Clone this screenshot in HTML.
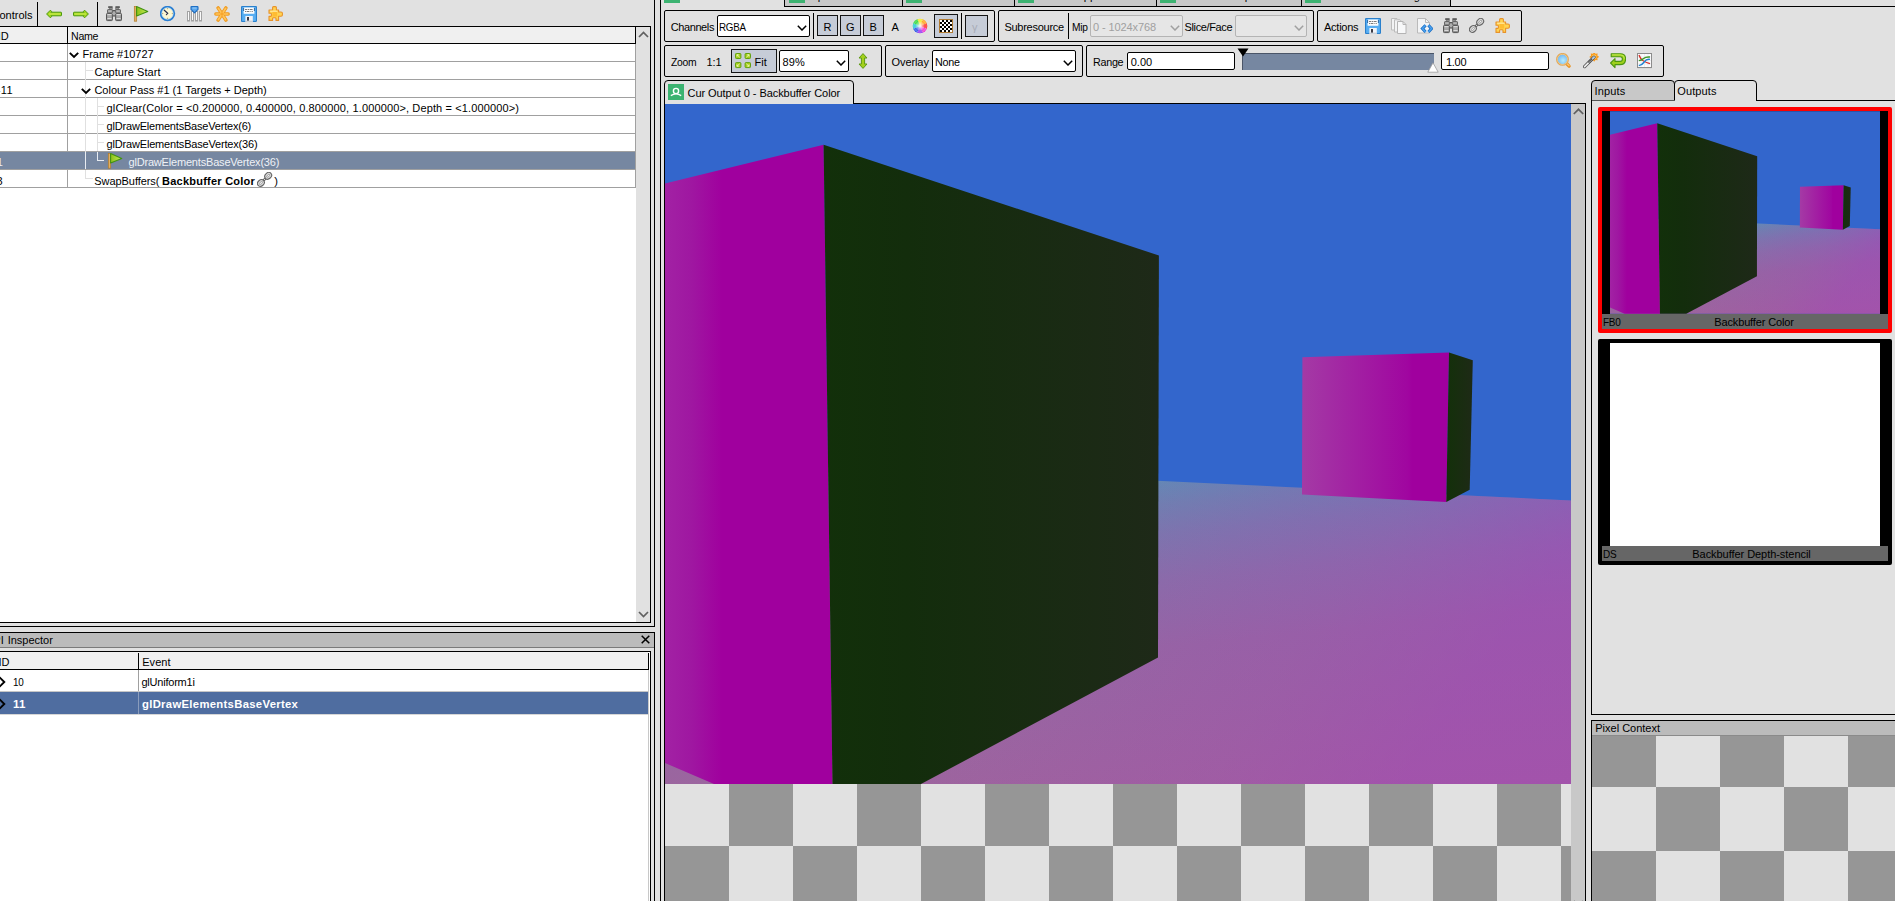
<!DOCTYPE html>
<html><head><meta charset="utf-8"><title>RenderDoc</title>
<style>
html,body{margin:0;padding:0;}
body{width:1895px;height:901px;overflow:hidden;background:#e1e1e1;position:relative;font:11px/13px "Liberation Sans", sans-serif;}
body>div,body>span,body>svg{position:absolute;display:block;}
body>div{box-sizing:content-box;}
body>span{white-space:pre;}
</style></head><body>
<span style="left:-8.5px;top:9px;color:#000;letter-spacing:0.004px;">Controls</span>
<div style="left:37px;top:2px;width:1px;height:24px;background:#000;"></div>
<div style="left:97px;top:2px;width:1px;height:24px;background:#000;"></div>
<svg style="left:46px;top:6px;" width="16" height="16" viewBox="0 0 16 16"><path d="M0.6 8 L4.4 4.2 L5.6 5.4 L4.9 6.2 L15 6.2 Q15.5 6.2 15.5 6.7 L15.5 9.3 Q15.5 9.8 15 9.8 L4.9 9.8 L5.6 10.6 L4.4 11.8 Z" fill="#a8d81e" stroke="#4c9a0e" stroke-width="1" stroke-linejoin="round"/><path d="M3 8 L14.5 8" stroke="#c6ee50" stroke-width="1.2"/></svg>
<svg style="left:73px;top:6px;" width="16" height="16" viewBox="0 0 16 16"><g transform="translate(16,0) scale(-1,1)"><path d="M0.6 8 L4.4 4.2 L5.6 5.4 L4.9 6.2 L15 6.2 Q15.5 6.2 15.5 6.7 L15.5 9.3 Q15.5 9.8 15 9.8 L4.9 9.8 L5.6 10.6 L4.4 11.8 Z" fill="#a8d81e" stroke="#4c9a0e" stroke-width="1" stroke-linejoin="round"/><path d="M3 8 L14.5 8" stroke="#c6ee50" stroke-width="1.2"/></g></svg>
<svg style="left:106px;top:6px;" width="16" height="16" viewBox="0 0 16 16"><g transform=""><rect x="2.2" y="0.2" width="4.4" height="1.8" fill="#585858"/><rect x="3.2" y="2" width="3.2" height="1.4" fill="#9a9a9a" stroke="#6a6a6a" stroke-width="0.5"/><rect x="1.5" y="3.6" width="4.9" height="3.6" rx="0.6" fill="#9c9c9c" stroke="#5a5a5a" stroke-width="0.9"/><rect x="2.3" y="4.6" width="3.3" height="0.9" fill="#d0d0d0"/><rect x="0.5" y="7.4" width="5.9" height="7.2" rx="0.9" fill="#8c8c8c" stroke="#565656" stroke-width="1"/><rect x="1.3" y="8.2" width="4.3" height="1.2" fill="#ececec"/><rect x="1.3" y="9.8" width="4.3" height="2" fill="#aaaaaa"/><rect x="1.3" y="12" width="4.3" height="1.1" fill="#dcdcdc"/></g><g transform="translate(16,0) scale(-1,1)"><rect x="2.2" y="0.2" width="4.4" height="1.8" fill="#585858"/><rect x="3.2" y="2" width="3.2" height="1.4" fill="#9a9a9a" stroke="#6a6a6a" stroke-width="0.5"/><rect x="1.5" y="3.6" width="4.9" height="3.6" rx="0.6" fill="#9c9c9c" stroke="#5a5a5a" stroke-width="0.9"/><rect x="2.3" y="4.6" width="3.3" height="0.9" fill="#d0d0d0"/><rect x="0.5" y="7.4" width="5.9" height="7.2" rx="0.9" fill="#8c8c8c" stroke="#565656" stroke-width="1"/><rect x="1.3" y="8.2" width="4.3" height="1.2" fill="#ececec"/><rect x="1.3" y="9.8" width="4.3" height="2" fill="#aaaaaa"/><rect x="1.3" y="12" width="4.3" height="1.1" fill="#dcdcdc"/></g><rect x="6.7" y="4" width="2.6" height="1.4" fill="#555"/><rect x="7.1" y="5.4" width="1.8" height="3.8" fill="#c4c4c4" stroke="#777" stroke-width="0.4"/><rect x="6.8" y="9.2" width="2.4" height="1.4" fill="#666"/></svg>
<svg style="left:133px;top:6px;" width="16" height="16" viewBox="0 0 16 16"><defs><linearGradient id="fgr0" x1="0" x2="1" y1="0" y2="0"><stop offset="0" stop-color="#8cc018"/><stop offset="1" stop-color="#c4ec58"/></linearGradient></defs><rect x="1.3" y="0.3" width="2.4" height="14.9" fill="#e2b062" stroke="#b07a28" stroke-width="0.7"/><path d="M3.6 0.6 L14.8 5.4 L3.6 10 Z" fill="url(#fgr0)" stroke="#429210" stroke-width="1.1" stroke-linejoin="round"/></svg>
<svg style="left:160px;top:6px;" width="16" height="16" viewBox="0 0 16 16"><circle cx="7.5" cy="7.5" r="6.8" fill="#fdf7d2" stroke="#2a7ed2" stroke-width="1.8"/><circle cx="7.5" cy="7.5" r="5.7" fill="none" stroke="#8cc4f6" stroke-width="0.6"/><path d="M4.3 4.2 L7.7 7.3 L6.4 8.7" fill="none" stroke="#2a3050" stroke-width="1.2" stroke-linecap="round"/><g fill="#a89058"><rect x="7.1" y="2.2" width="0.8" height="1"/><rect x="7.1" y="11.8" width="0.8" height="1"/><rect x="2.2" y="7.1" width="1" height="0.8"/><rect x="11.8" y="7.1" width="1" height="0.8"/></g></svg>
<svg style="left:187px;top:6px;" width="16" height="16" viewBox="0 0 16 16"><g fill="#fbfbfb" stroke="#a2a2a2" stroke-width="1"><rect x="0.5" y="5.5" width="2" height="9.5"/><rect x="4.5" y="5.5" width="2" height="9.5"/><rect x="8.5" y="5.5" width="2" height="9.5"/><rect x="12.5" y="5.5" width="2" height="9.5"/></g><path d="M4.6 0.6 L10.4 0.6 Q11 0.6 11 1.2 L11 3.4 L7.5 6.8 L4 3.4 L4 1.2 Q4 0.6 4.6 0.6 Z" fill="#5aa6ec" stroke="#1f6fc4" stroke-width="1.1" stroke-linejoin="round"/><path d="M5.4 2 L9.6 2" stroke="#9cd0fa" stroke-width="1"/></svg>
<svg style="left:214px;top:6px;" width="16" height="16" viewBox="0 0 16 16"><g stroke="#f09a1e" stroke-width="3.5" stroke-linecap="round"><path d="M1.9 8 L14.1 8"/><path d="M4.1 1.9 L11.9 14.1"/><path d="M11.9 1.9 L4.1 14.1"/></g><g stroke="#ffc45a" stroke-width="1.7" stroke-linecap="round"><path d="M2.2 8 L13.8 8"/><path d="M4.3 2.3 L11.7 13.7"/><path d="M11.7 2.3 L4.3 13.7"/></g><circle cx="8" cy="8" r="1.7" fill="#f8a62c"/></svg>
<svg style="left:241px;top:6px;" width="16" height="16" viewBox="0 0 16 16"><path d="M1.6 0.5 L14.4 0.5 Q15.5 0.5 15.5 1.6 L15.5 14.4 Q15.5 15.5 14.4 15.5 L1.6 15.5 Q0.5 15.5 0.5 14.4 L0.5 1.6 Q0.5 0.5 1.6 0.5 Z" fill="#58aef2" stroke="#2a80cc" stroke-width="1.2"/><rect x="2.6" y="1.4" width="10.8" height="6.4" rx="0.6" fill="#fdfdfd"/><rect x="2.2" y="2" width="0.9" height="3" fill="#1d5a9a"/><rect x="12.9" y="2" width="0.9" height="3" fill="#1d5a9a"/><g fill="#6e6e6e"><rect x="4" y="3" width="2.4" height="0.9"/><rect x="7" y="3" width="1.4" height="0.9"/><rect x="9" y="3" width="2.6" height="0.9"/><rect x="4" y="5" width="1.4" height="0.9"/><rect x="6" y="5" width="2.4" height="0.9"/><rect x="9.4" y="5" width="1" height="0.9"/><rect x="11" y="5" width="0.8" height="0.9"/></g><rect x="4.4" y="10" width="7.4" height="5.8" fill="#f2f4f8"/><rect x="4.4" y="14.6" width="7.4" height="1.2" fill="#c8ccd4"/><rect x="6" y="11" width="2" height="3.6" fill="#3c3c46"/></svg>
<svg style="left:268px;top:6px;" width="16" height="16" viewBox="0 0 16 16"><path d="M4.6 4 L4.6 1.6 Q4.6 0.6 5.6 0.6 L7.4 0.6 Q8.4 0.6 8.4 1.6 L8.4 4 L10.6 4 L10.6 6 L13 6 Q14.4 6 14.4 7.2 L14.4 9 Q14.4 10.2 13 10.2 L10.6 10.2 L10.6 14.4 L8 14.4 L8 12.6 Q8 11.8 7 11.8 L5.4 11.8 Q4.6 11.8 4.6 12.6 L4.6 14.4 L1 14.4 L1 10.4 L2.6 10.4 Q3.4 10.4 3.4 9.4 L3.4 8 Q3.4 7.2 2.6 7.2 L1 7.2 L1 4 Z" fill="#ffd452" stroke="#e8922a" stroke-width="1.1" stroke-linejoin="round"/><path d="M4.4 5.4 L9.2 5.4 L9.2 10.6 L4.4 10.6 Z" fill="#ffb428" opacity="0.75"/><path d="M2.2 5.2 L9.4 5.2" stroke="#fff0b0" stroke-width="1"/></svg>
<div style="left:0px;top:27px;width:650px;height:595px;background:#fff;"></div>
<div style="left:0px;top:27px;width:635px;height:16px;background:#f0f0f0;"></div>
<div style="left:636px;top:27px;width:14px;height:595px;background:#e1e1e1;"></div>
<div style="left:0px;top:26px;width:651px;height:1px;background:#000;"></div>
<div style="left:650px;top:26px;width:1px;height:597px;background:#000;"></div>
<div style="left:0px;top:622px;width:651px;height:1px;background:#000;"></div>
<div style="left:0px;top:43px;width:636px;height:1px;background:#000;"></div>
<div style="left:67px;top:27px;width:1px;height:17px;background:#000;"></div>
<div style="left:635px;top:27px;width:1px;height:17px;background:#000;"></div>
<div style="left:635px;top:44px;width:1px;height:144px;background:#a0a0a0;"></div>
<span style="left:-2.2px;top:30px;color:#000;letter-spacing:-0.150px;">ID</span>
<span style="left:71.2px;top:30px;color:#000;letter-spacing:-0.300px;transform:scaleX(0.9665);transform-origin:0 0;">Name</span>
<div style="left:0px;top:61px;width:635px;height:1px;background:#a0a0a0;"></div>
<div style="left:0px;top:79px;width:635px;height:1px;background:#a0a0a0;"></div>
<div style="left:0px;top:97px;width:635px;height:1px;background:#a0a0a0;"></div>
<div style="left:0px;top:115px;width:635px;height:1px;background:#a0a0a0;"></div>
<div style="left:0px;top:133px;width:635px;height:1px;background:#a0a0a0;"></div>
<div style="left:0px;top:151px;width:635px;height:1px;background:#a0a0a0;"></div>
<div style="left:0px;top:169px;width:635px;height:1px;background:#a0a0a0;"></div>
<div style="left:0px;top:187px;width:635px;height:1px;background:#a0a0a0;"></div>
<div style="left:67px;top:44px;width:1px;height:144px;background:#a0a0a0;"></div>
<div style="left:0px;top:152px;width:635px;height:17px;background:#7687a1;"></div>
<div style="left:85px;top:62px;width:1px;height:90px;background:#e0e0e0;"></div>
<div style="left:85px;top:170px;width:1px;height:9px;background:#e0e0e0;"></div>
<div style="left:85px;top:70px;width:8px;height:1px;background:#e0e0e0;"></div>
<div style="left:85px;top:178px;width:8px;height:1px;background:#e0e0e0;"></div>
<div style="left:97px;top:98px;width:1px;height:53px;background:#e0e0e0;"></div>
<div style="left:97px;top:106px;width:7px;height:1px;background:#e0e0e0;"></div>
<div style="left:97px;top:124px;width:7px;height:1px;background:#e0e0e0;"></div>
<div style="left:97px;top:142px;width:7px;height:1px;background:#e0e0e0;"></div>
<div style="left:85px;top:152px;width:1px;height:17px;background:#e8ecf2;"></div>
<div style="left:97px;top:152px;width:1px;height:9px;background:#e8ecf2;"></div>
<div style="left:97px;top:160px;width:7px;height:1px;background:#e8ecf2;"></div>
<svg style="left:69px;top:52px;" width="10" height="7" viewBox="0 0 10 7"><path d="M0.8 0.8 L5 5 L9.2 0.8" fill="none" stroke="#000" stroke-width="1.9"/></svg>
<svg style="left:81px;top:88px;" width="10" height="7" viewBox="0 0 10 7"><path d="M0.8 0.8 L5 5 L9.2 0.8" fill="none" stroke="#000" stroke-width="1.9"/></svg>
<span style="left:82.5px;top:48px;color:#000;letter-spacing:-0.037px;">Frame #10727</span>
<span style="left:94.4px;top:66px;color:#000;letter-spacing:0.060px;">Capture Start</span>
<span style="left:94.4px;top:84px;color:#000;letter-spacing:-0.004px;">Colour Pass #1 (1 Targets + Depth)</span>
<span style="left:106.6px;top:102px;color:#000;letter-spacing:0.131px;">glClear(Color = &lt;0.200000, 0.400000, 0.800000, 1.000000&gt;, Depth = &lt;1.000000&gt;)</span>
<span style="left:106.6px;top:120px;color:#000;letter-spacing:-0.196px;">glDrawElementsBaseVertex(6)</span>
<span style="left:106.6px;top:138px;color:#000;letter-spacing:-0.182px;">glDrawElementsBaseVertex(36)</span>
<svg style="left:107px;top:153px;" width="16" height="16" viewBox="0 0 16 16"><defs><linearGradient id="fgr1" x1="0" x2="1" y1="0" y2="0"><stop offset="0" stop-color="#8cc018"/><stop offset="1" stop-color="#c4ec58"/></linearGradient></defs><rect x="1.3" y="0.3" width="2.4" height="14.9" fill="#e2b062" stroke="#b07a28" stroke-width="0.7"/><path d="M3.6 0.6 L14.8 5.4 L3.6 10 Z" fill="url(#fgr1)" stroke="#429210" stroke-width="1.1" stroke-linejoin="round"/></svg>
<span style="left:128.5px;top:156px;color:#eef1f6;letter-spacing:-0.186px;">glDrawElementsBaseVertex(36)</span>
<span style="left:94.3px;top:175px;color:#000;letter-spacing:-0.061px;">SwapBuffers(</span>
<span style="left:162px;top:175px;color:#000;font-weight:bold;letter-spacing:0.241px;">Backbuffer Color</span>
<svg style="left:256.7px;top:172px;" width="16" height="16" viewBox="0 0 16 16"><path d="M5.4 9.6 L9.8 5.2" stroke="#666" stroke-width="2.6"/><path d="M5.4 9.6 L9.8 5.2" stroke="#e6e6e6" stroke-width="0.9"/><g transform="rotate(-42 11.2 3.8)"><ellipse cx="11.2" cy="3.8" rx="3.7" ry="3" fill="#dadada" stroke="#666" stroke-width="1.1"/><ellipse cx="11.2" cy="3.8" rx="1.9" ry="0.9" fill="#f4f4f4" stroke="#8a8a8a" stroke-width="0.7"/></g><g transform="rotate(-42 3.9 11)"><ellipse cx="3.9" cy="11" rx="3.7" ry="3" fill="#dadada" stroke="#666" stroke-width="1.1"/><ellipse cx="3.9" cy="11" rx="1.9" ry="0.9" fill="#f4f4f4" stroke="#8a8a8a" stroke-width="0.7"/></g></svg>
<span style="left:274.3px;top:175px;color:#000;">)</span>
<span style="left:-9.6px;top:84px;color:#000;letter-spacing:0.299px;">2-11</span>
<span style="left:-8.6px;top:156px;color:#eef1f6;">11</span>
<span style="left:-9.5px;top:175px;color:#000;">13</span>
<svg style="left:638px;top:31px;" width="11" height="7" viewBox="0 0 11 7"><path d="M1 6 L5.5 1.5 L10 6" fill="none" stroke="#606060" stroke-width="1.7"/></svg>
<svg style="left:638px;top:611px;" width="11" height="7" viewBox="0 0 11 7"><path d="M1 1 L5.5 5.5 L10 1" fill="none" stroke="#606060" stroke-width="1.7"/></svg>
<div style="left:654px;top:0px;width:1px;height:627px;background:#000;"></div>
<div style="left:0px;top:626px;width:655px;height:1px;background:#000;"></div>
<div style="left:660px;top:0px;width:1px;height:902px;background:#000;"></div>
<div style="left:0px;top:632px;width:655px;height:1px;background:#000;"></div>
<div style="left:654px;top:632px;width:1px;height:270px;background:#000;"></div>
<div style="left:0px;top:633px;width:654px;height:14px;background:#bbbbbb;"></div>
<div style="left:0px;top:647px;width:654px;height:1px;background:#7a7a7a;"></div>
<span style="left:-14.5px;top:634px;color:#000;letter-spacing:0.322px;">API</span>
<span style="left:7.7px;top:634px;color:#000;letter-spacing:-0.006px;">Inspector</span>
<svg style="left:641px;top:635px;" width="9" height="9" viewBox="0 0 9 9"><path d="M0.7 0.7 L8.3 8.3 M8.3 0.7 L0.7 8.3" stroke="#000" stroke-width="1.5"/></svg>
<div style="left:0px;top:652px;width:650px;height:249px;background:#fff;"></div>
<div style="left:0px;top:652px;width:648px;height:17px;background:#f0f0f0;"></div>
<div style="left:0px;top:651px;width:651px;height:1px;background:#000;"></div>
<div style="left:650px;top:651px;width:1px;height:251px;background:#000;"></div>
<div style="left:0px;top:669px;width:649px;height:1px;background:#000;"></div>
<div style="left:138px;top:653px;width:1px;height:17px;background:#000;"></div>
<div style="left:648px;top:653px;width:1px;height:17px;background:#000;"></div>
<div style="left:138px;top:670px;width:1px;height:44px;background:#a0a0a0;"></div>
<div style="left:648px;top:670px;width:1px;height:232px;background:#c8c8c8;"></div>
<div style="left:0px;top:691px;width:648px;height:1px;background:#c6c6c6;"></div>
<div style="left:0px;top:714px;width:648px;height:1px;background:#d6d6d6;"></div>
<div style="left:0px;top:692px;width:648px;height:22px;background:#4f6da0;"></div>
<div style="left:138px;top:692px;width:1px;height:22px;background:#8a9cbc;"></div>
<span style="left:-1.5px;top:656px;color:#000;letter-spacing:-0.100px;">ID</span>
<span style="left:142.2px;top:656px;color:#000;letter-spacing:0.072px;">Event</span>
<svg style="left:0px;top:675px;" width="8" height="14" viewBox="0 0 8 14"><path d="M-1 1.8 L4.3 7 L-1 12.2" fill="none" stroke="#000" stroke-width="1.9"/></svg>
<svg style="left:0px;top:697px;" width="8" height="14" viewBox="0 0 8 14"><path d="M-1 1.8 L4.3 7 L-1 12.2" fill="none" stroke="#000" stroke-width="1.9"/></svg>
<span style="left:12.8px;top:676px;color:#000;letter-spacing:-0.300px;transform:scaleX(0.9013);transform-origin:0 0;">10</span>
<span style="left:141.4px;top:676px;color:#000;letter-spacing:-0.213px;">glUniform1i</span>
<span style="left:13px;top:698px;color:#fff;font-weight:bold;letter-spacing:0.300px;transform:scaleX(1.0457);transform-origin:0 0;">11</span>
<span style="left:142px;top:698px;color:#fff;font-weight:bold;letter-spacing:0.300px;transform:scaleX(1.0268);transform-origin:0 0;">glDrawElementsBaseVertex</span>
<div style="left:785px;top:0px;width:665px;height:6px;background:#c8c8c8;"></div>
<div style="left:784px;top:6px;width:667px;height:1px;background:#000;"></div>
<div style="left:1450px;top:6px;width:446px;height:1px;background:#000;"></div>
<div style="left:784px;top:0px;width:1px;height:7px;background:#000;"></div>
<div style="left:902px;top:0px;width:1px;height:7px;background:#000;"></div>
<div style="left:1014px;top:0px;width:1px;height:7px;background:#000;"></div>
<div style="left:1156px;top:0px;width:1px;height:7px;background:#000;"></div>
<div style="left:1301px;top:0px;width:1px;height:7px;background:#000;"></div>
<div style="left:1450px;top:0px;width:1px;height:7px;background:#000;"></div>
<div style="left:664px;top:0px;width:16px;height:3px;background:#3cb371;"></div>
<div style="left:789px;top:0px;width:16px;height:3px;background:#3cb371;"></div>
<div style="left:906px;top:0px;width:16px;height:3px;background:#3cb371;"></div>
<div style="left:1018px;top:0px;width:16px;height:3px;background:#3cb371;"></div>
<div style="left:1160px;top:0px;width:16px;height:3px;background:#3cb371;"></div>
<div style="left:1305px;top:0px;width:16px;height:3px;background:#3cb371;"></div>
<span style="left:684px;top:-10px;color:#000;">Texture Viewer</span>
<span style="left:808px;top:-10px;color:#000;">Pipeline State</span>
<span style="left:925px;top:-10px;color:#000;">Mesh Viewer</span>
<span style="left:1038px;top:-10px;color:#000;">Launch Application</span>
<span style="left:1180px;top:-10px;color:#000;">Resource Inspector</span>
<span style="left:1325px;top:-10px;color:#000;">Errors and Warnings</span>
<div style="left:664px;top:10px;width:329px;height:30px;border:1px solid #000;background:transparent;border-radius:2px;"></div>
<div style="left:998px;top:10px;width:314px;height:30px;border:1px solid #000;background:transparent;border-radius:2px;"></div>
<div style="left:1317px;top:10px;width:203px;height:30px;border:1px solid #000;background:transparent;border-radius:2px;"></div>
<div style="left:664px;top:45px;width:216px;height:30px;border:1px solid #000;background:transparent;border-radius:2px;"></div>
<div style="left:885px;top:45px;width:196px;height:30px;border:1px solid #000;background:transparent;border-radius:2px;"></div>
<div style="left:1086px;top:45px;width:576px;height:30px;border:1px solid #000;background:transparent;border-radius:2px;"></div>
<span style="left:670.7px;top:21px;color:#000;letter-spacing:-0.398px;">Channels</span>
<div style="left:717px;top:15px;width:91px;height:20px;border:1px solid #000;background:#fff;border-radius:2px;"></div>
<svg style="left:797px;top:25px;" width="10" height="6" viewBox="0 0 10 6"><path d="M0.8 0.8 L5 5 L9.2 0.8" fill="none" stroke="#000" stroke-width="1.5"/></svg>
<span style="left:719.4px;top:21px;color:#000;letter-spacing:-0.300px;transform:scaleX(0.8904);transform-origin:0 0;">RGBA</span>
<div style="left:813px;top:13px;width:1px;height:26px;background:#000;"></div>
<div style="left:817px;top:15px;width:19px;height:19px;border:1px solid #141414;background:#c6ccd7;border-radius:0px;"></div>
<span style="left:823.5px;top:21px;color:#000;">R</span>
<div style="left:840px;top:15px;width:19px;height:19px;border:1px solid #141414;background:#c6ccd7;border-radius:0px;"></div>
<span style="left:846px;top:21px;color:#000;">G</span>
<div style="left:863px;top:15px;width:19px;height:19px;border:1px solid #141414;background:#c6ccd7;border-radius:0px;"></div>
<span style="left:869.5px;top:21px;color:#000;">B</span>
<span style="left:891.6px;top:21px;color:#000;">A</span>
<svg style="left:912px;top:18px;" width="16" height="16" viewBox="0 0 16 16"><defs><clipPath id="wc"><circle cx="8" cy="8" r="7.3"/></clipPath><radialGradient id="wg"><stop offset="0" stop-color="#fff" stop-opacity="0.95"/><stop offset="0.8" stop-color="#fff" stop-opacity="0"/></radialGradient></defs><g clip-path="url(#wc)"><path d="M8 8 L3.41 -3.09 L12.92 -2.94 Z" fill="#f4e820"/><path d="M8 8 L12.59 -3.09 L19.22 3.74 Z" fill="#ffa018"/><path d="M8 8 L19.09 3.41 L18.94 12.92 Z" fill="#ff2a20"/><path d="M8 8 L19.09 12.59 L12.26 19.22 Z" fill="#f030d0"/><path d="M8 8 L12.59 19.09 L3.08 18.94 Z" fill="#9030f0"/><path d="M8 8 L3.41 19.09 L-3.22 12.26 Z" fill="#2850e8"/><path d="M8 8 L-3.09 12.59 L-2.94 3.08 Z" fill="#20c8d0"/><path d="M8 8 L-3.09 3.41 L3.74 -3.22 Z" fill="#30d838"/></g><circle cx="8" cy="8" r="7.3" fill="url(#wg)"/><circle cx="8" cy="8" r="6.2" fill="none" stroke="#fff" stroke-opacity="0.45" stroke-width="0.8"/></svg>
<div style="left:934px;top:14px;width:22px;height:22px;border:1px solid #141414;background:#c6ccd7;border-radius:0px;"></div>
<svg style="left:939px;top:19px;" width="14" height="14" viewBox="0 0 14 14"><rect x="0.5" y="0.5" width="13" height="13" fill="#fff" stroke="#b07a30" stroke-width="1"/><rect x="3" y="1" width="2" height="2" fill="#000"/><rect x="7" y="1" width="2" height="2" fill="#000"/><rect x="11" y="1" width="2" height="2" fill="#000"/><rect x="1" y="3" width="2" height="2" fill="#000"/><rect x="5" y="3" width="2" height="2" fill="#000"/><rect x="9" y="3" width="2" height="2" fill="#000"/><rect x="3" y="5" width="2" height="2" fill="#000"/><rect x="7" y="5" width="2" height="2" fill="#000"/><rect x="11" y="5" width="2" height="2" fill="#000"/><rect x="1" y="7" width="2" height="2" fill="#000"/><rect x="5" y="7" width="2" height="2" fill="#000"/><rect x="9" y="7" width="2" height="2" fill="#000"/><rect x="3" y="9" width="2" height="2" fill="#000"/><rect x="7" y="9" width="2" height="2" fill="#000"/><rect x="11" y="9" width="2" height="2" fill="#000"/><rect x="1" y="11" width="2" height="2" fill="#000"/><rect x="5" y="11" width="2" height="2" fill="#000"/><rect x="9" y="11" width="2" height="2" fill="#000"/></svg>
<div style="left:961px;top:13px;width:1px;height:26px;background:#000;"></div>
<div style="left:965px;top:15px;width:21px;height:20px;border:1px solid #141414;background:#c6ccd7;border-radius:0px;"></div>
<span style="left:972px;top:21px;color:#a9adb8;">γ</span>
<span style="left:1004.4px;top:21px;color:#000;letter-spacing:-0.252px;">Subresource</span>
<div style="left:1068px;top:13px;width:1px;height:26px;background:#000;"></div>
<span style="left:1071.6px;top:21px;color:#000;letter-spacing:-0.300px;transform:scaleX(0.9267);transform-origin:0 0;">Mip</span>
<div style="left:1090px;top:15px;width:91px;height:20px;border:1px solid #b4b4b4;background:#e6e6e6;border-radius:2px;"></div>
<svg style="left:1170px;top:25px;" width="10" height="6" viewBox="0 0 10 6"><path d="M0.8 0.8 L5 5 L9.2 0.8" fill="none" stroke="#a0a0a0" stroke-width="1.5"/></svg>
<span style="left:1093px;top:21px;color:#a0a0a0;letter-spacing:-0.102px;">0 - 1024x768</span>
<span style="left:1184.6px;top:21px;color:#000;letter-spacing:-0.376px;">Slice/Face</span>
<div style="left:1235px;top:15px;width:70px;height:20px;border:1px solid #b4b4b4;background:#e6e6e6;border-radius:2px;"></div>
<svg style="left:1294px;top:25px;" width="10" height="6" viewBox="0 0 10 6"><path d="M0.8 0.8 L5 5 L9.2 0.8" fill="none" stroke="#a0a0a0" stroke-width="1.5"/></svg>
<span style="left:1324px;top:21px;color:#000;letter-spacing:-0.254px;">Actions</span>
<svg style="left:1365px;top:18px;" width="16" height="16" viewBox="0 0 16 16"><path d="M1.6 0.5 L14.4 0.5 Q15.5 0.5 15.5 1.6 L15.5 14.4 Q15.5 15.5 14.4 15.5 L1.6 15.5 Q0.5 15.5 0.5 14.4 L0.5 1.6 Q0.5 0.5 1.6 0.5 Z" fill="#58aef2" stroke="#2a80cc" stroke-width="1.2"/><rect x="2.6" y="1.4" width="10.8" height="6.4" rx="0.6" fill="#fdfdfd"/><rect x="2.2" y="2" width="0.9" height="3" fill="#1d5a9a"/><rect x="12.9" y="2" width="0.9" height="3" fill="#1d5a9a"/><g fill="#6e6e6e"><rect x="4" y="3" width="2.4" height="0.9"/><rect x="7" y="3" width="1.4" height="0.9"/><rect x="9" y="3" width="2.6" height="0.9"/><rect x="4" y="5" width="1.4" height="0.9"/><rect x="6" y="5" width="2.4" height="0.9"/><rect x="9.4" y="5" width="1" height="0.9"/><rect x="11" y="5" width="0.8" height="0.9"/></g><rect x="4.4" y="10" width="7.4" height="5.8" fill="#f2f4f8"/><rect x="4.4" y="14.6" width="7.4" height="1.2" fill="#c8ccd4"/><rect x="6" y="11" width="2" height="3.6" fill="#3c3c46"/></svg>
<svg style="left:1391px;top:18px;" width="16" height="16" viewBox="0 0 16 16"><g fill="#f2f3f4" stroke="#bcbcbc" stroke-width="1"><path d="M0.5 0.5 L6 0.5 L7.5 2 L7.5 12 L0.5 12 Z"/><path d="M3.5 1.8 L9 1.8 L11 3.8 L11 14 L3.5 14 Z"/><path d="M6.5 3.5 L12 3.5 L15 6.5 L15 15.5 L6.5 15.5 Z" fill="#f7f8f9" stroke="#b4b4b4"/><path d="M12 3.5 L12 6.5 L15 6.5" fill="none" stroke="#b4b4b4"/></g></svg>
<svg style="left:1417px;top:18px;" width="16" height="16" viewBox="0 0 16 16"><path d="M0.5 0.5 L8.5 0.5 L12.5 4.5 L12.5 15 L0.5 15 Z" fill="#f3f4f5" stroke="#bababa" stroke-width="1"/><path d="M8.5 0.5 L8.5 4.5 L12.5 4.5" fill="none" stroke="#bababa" stroke-width="1"/><g fill="none" stroke="#1a6cc0" stroke-width="3" stroke-linejoin="miter"><path d="M8.6 7.2 L5.4 10.6 L8.6 14"/><path d="M11.4 7.2 L14.6 10.6 L11.4 14"/></g><g fill="none" stroke="#4aa2f0" stroke-width="1.5" stroke-linejoin="miter"><path d="M8.6 7.2 L5.4 10.6 L8.6 14"/><path d="M11.4 7.2 L14.6 10.6 L11.4 14"/></g></svg>
<svg style="left:1443px;top:18px;" width="16" height="16" viewBox="0 0 16 16"><g transform=""><rect x="2.2" y="0.2" width="4.4" height="1.8" fill="#585858"/><rect x="3.2" y="2" width="3.2" height="1.4" fill="#9a9a9a" stroke="#6a6a6a" stroke-width="0.5"/><rect x="1.5" y="3.6" width="4.9" height="3.6" rx="0.6" fill="#9c9c9c" stroke="#5a5a5a" stroke-width="0.9"/><rect x="2.3" y="4.6" width="3.3" height="0.9" fill="#d0d0d0"/><rect x="0.5" y="7.4" width="5.9" height="7.2" rx="0.9" fill="#8c8c8c" stroke="#565656" stroke-width="1"/><rect x="1.3" y="8.2" width="4.3" height="1.2" fill="#ececec"/><rect x="1.3" y="9.8" width="4.3" height="2" fill="#aaaaaa"/><rect x="1.3" y="12" width="4.3" height="1.1" fill="#dcdcdc"/></g><g transform="translate(16,0) scale(-1,1)"><rect x="2.2" y="0.2" width="4.4" height="1.8" fill="#585858"/><rect x="3.2" y="2" width="3.2" height="1.4" fill="#9a9a9a" stroke="#6a6a6a" stroke-width="0.5"/><rect x="1.5" y="3.6" width="4.9" height="3.6" rx="0.6" fill="#9c9c9c" stroke="#5a5a5a" stroke-width="0.9"/><rect x="2.3" y="4.6" width="3.3" height="0.9" fill="#d0d0d0"/><rect x="0.5" y="7.4" width="5.9" height="7.2" rx="0.9" fill="#8c8c8c" stroke="#565656" stroke-width="1"/><rect x="1.3" y="8.2" width="4.3" height="1.2" fill="#ececec"/><rect x="1.3" y="9.8" width="4.3" height="2" fill="#aaaaaa"/><rect x="1.3" y="12" width="4.3" height="1.1" fill="#dcdcdc"/></g><rect x="6.7" y="4" width="2.6" height="1.4" fill="#555"/><rect x="7.1" y="5.4" width="1.8" height="3.8" fill="#c4c4c4" stroke="#777" stroke-width="0.4"/><rect x="6.8" y="9.2" width="2.4" height="1.4" fill="#666"/></svg>
<svg style="left:1469px;top:18px;" width="16" height="16" viewBox="0 0 16 16"><path d="M5.4 9.6 L9.8 5.2" stroke="#666" stroke-width="2.6"/><path d="M5.4 9.6 L9.8 5.2" stroke="#e6e6e6" stroke-width="0.9"/><g transform="rotate(-42 11.2 3.8)"><ellipse cx="11.2" cy="3.8" rx="3.7" ry="3" fill="#dadada" stroke="#666" stroke-width="1.1"/><ellipse cx="11.2" cy="3.8" rx="1.9" ry="0.9" fill="#f4f4f4" stroke="#8a8a8a" stroke-width="0.7"/></g><g transform="rotate(-42 3.9 11)"><ellipse cx="3.9" cy="11" rx="3.7" ry="3" fill="#dadada" stroke="#666" stroke-width="1.1"/><ellipse cx="3.9" cy="11" rx="1.9" ry="0.9" fill="#f4f4f4" stroke="#8a8a8a" stroke-width="0.7"/></g></svg>
<svg style="left:1495px;top:18px;" width="16" height="16" viewBox="0 0 16 16"><path d="M4.6 4 L4.6 1.6 Q4.6 0.6 5.6 0.6 L7.4 0.6 Q8.4 0.6 8.4 1.6 L8.4 4 L10.6 4 L10.6 6 L13 6 Q14.4 6 14.4 7.2 L14.4 9 Q14.4 10.2 13 10.2 L10.6 10.2 L10.6 14.4 L8 14.4 L8 12.6 Q8 11.8 7 11.8 L5.4 11.8 Q4.6 11.8 4.6 12.6 L4.6 14.4 L1 14.4 L1 10.4 L2.6 10.4 Q3.4 10.4 3.4 9.4 L3.4 8 Q3.4 7.2 2.6 7.2 L1 7.2 L1 4 Z" fill="#ffd452" stroke="#e8922a" stroke-width="1.1" stroke-linejoin="round"/><path d="M4.4 5.4 L9.2 5.4 L9.2 10.6 L4.4 10.6 Z" fill="#ffb428" opacity="0.75"/><path d="M2.2 5.2 L9.4 5.2" stroke="#fff0b0" stroke-width="1"/></svg>
<span style="left:670.7px;top:56px;color:#000;letter-spacing:-0.300px;transform:scaleX(0.9396);transform-origin:0 0;">Zoom</span>
<span style="left:706.4px;top:56px;color:#000;letter-spacing:-0.066px;">1:1</span>
<div style="left:731px;top:49px;width:44px;height:22px;border:1px solid #141414;background:#c6ccd7;border-radius:0px;"></div>
<svg style="left:735px;top:53px;" width="16" height="16" viewBox="0 0 16 16"><rect x="0.5" y="0.5" width="5.4" height="5" rx="0.8" fill="#a6d01a" stroke="#62a012" stroke-width="1"/><rect x="10.1" y="0.5" width="5.4" height="5" rx="0.8" fill="#a6d01a" stroke="#62a012" stroke-width="1"/><rect x="0.5" y="9.6" width="5.4" height="5" rx="0.8" fill="#a6d01a" stroke="#62a012" stroke-width="1"/><rect x="10.1" y="9.6" width="5.4" height="5" rx="0.8" fill="#a6d01a" stroke="#62a012" stroke-width="1"/><g stroke="#eaf6b8" stroke-width="0.9" fill="none"><path d="M4.6 4.2 L2 1.8 M2 3.6 L2 1.8 L3.8 1.8"/><path d="M11.4 4.2 L14 1.8 M14 3.6 L14 1.8 L12.2 1.8"/><path d="M4.6 10.8 L2 13.2 M2 11.4 L2 13.2 L3.8 13.2"/><path d="M11.4 10.8 L14 13.2 M14 11.4 L14 13.2 L12.2 13.2"/></g></svg>
<span style="left:754.6px;top:56px;color:#000;letter-spacing:-0.011px;">Fit</span>
<div style="left:779px;top:50px;width:68px;height:20px;border:1px solid #000;background:#fff;border-radius:2px;"></div>
<svg style="left:836px;top:60px;" width="10" height="6" viewBox="0 0 10 6"><path d="M0.8 0.8 L5 5 L9.2 0.8" fill="none" stroke="#000" stroke-width="1.5"/></svg>
<span style="left:782.5px;top:56px;color:#000;letter-spacing:0.156px;">89%</span>
<svg style="left:855px;top:53px;" width="16" height="16" viewBox="0 0 16 16"><path d="M8 0.6 L12 5 L9.6 5 L9.6 11 L12 11 L8 15.4 L4 11 L6.4 11 L6.4 5 L4 5 Z" fill="#a4d01c" stroke="#5f9a14" stroke-width="1" stroke-linejoin="round"/></svg>
<span style="left:891.6px;top:56px;color:#000;letter-spacing:-0.101px;">Overlay</span>
<div style="left:932px;top:50px;width:142px;height:20px;border:1px solid #000;background:#fff;border-radius:2px;"></div>
<svg style="left:1063px;top:60px;" width="10" height="6" viewBox="0 0 10 6"><path d="M0.8 0.8 L5 5 L9.2 0.8" fill="none" stroke="#000" stroke-width="1.5"/></svg>
<span style="left:934.6px;top:56px;color:#000;letter-spacing:-0.300px;transform:scaleX(0.9802);transform-origin:0 0;">None</span>
<span style="left:1092.5px;top:56px;color:#000;letter-spacing:-0.300px;transform:scaleX(0.9799);transform-origin:0 0;">Range</span>
<div style="left:1127px;top:52px;width:106px;height:16px;border:1px solid #000;background:#fff;border-radius:2px;"></div>
<span style="left:1130.7px;top:56px;color:#000;letter-spacing:0.020px;">0.00</span>
<div style="left:1242px;top:53px;width:192px;height:17px;background:#7687a1;"></div>
<div style="left:1242px;top:53px;width:192px;height:1px;background:#4a5568;"></div>
<div style="left:1242px;top:53px;width:1px;height:17px;background:#4a5568;"></div>
<svg style="left:1237px;top:48px;" width="12" height="9" viewBox="0 0 12 9"><path d="M0.5 0.5 L11.5 0.5 L6 8.5 Z" fill="#000"/></svg>
<svg style="left:1427px;top:62px;" width="12" height="11" viewBox="0 0 12 11"><path d="M6 0.8 L11.2 10.2 L0.8 10.2 Z" fill="#fff" stroke="#9a9a9a" stroke-width="0.8"/></svg>
<div style="left:1441px;top:52px;width:106px;height:16px;border:1px solid #000;background:#fff;border-radius:2px;"></div>
<span style="left:1446px;top:56px;color:#000;letter-spacing:-0.280px;">1.00</span>
<svg style="left:1556px;top:53px;" width="16" height="16" viewBox="0 0 16 16"><path d="M11 11 L13.1 13.1" stroke="#e8962a" stroke-width="3.4" stroke-linecap="round"/><path d="M11.4 11 L13 12.6" stroke="#ffc870" stroke-width="1.2" stroke-linecap="round"/><defs><radialGradient id="zg" cx="0.55" cy="0.6" r="0.6"><stop offset="0" stop-color="#b8ecff"/><stop offset="1" stop-color="#6ab2f2"/></radialGradient></defs><circle cx="6.5" cy="6.4" r="5.6" fill="url(#zg)" stroke="#e2a85a" stroke-width="1.7"/><circle cx="6.5" cy="6.4" r="5.1" fill="none" stroke="#f6d8a0" stroke-width="0.6"/></svg>
<svg style="left:1583px;top:53px;" width="16" height="16" viewBox="0 0 16 16"><polygon points="16.10,3.90 14.34,5.20 14.66,7.36 12.50,7.04 11.20,8.80 9.90,7.04 7.74,7.36 8.06,5.20 6.30,3.90 8.06,2.60 7.74,0.44 9.90,0.76 11.20,-1.00 12.50,0.76 14.66,0.44 14.34,2.60" fill="#f89a1c"/><circle cx="11.2" cy="3.9" r="2.4" fill="#ffc860"/><path d="M1.6 13.6 L11 4.2" stroke="#5a5a5a" stroke-width="3.3" stroke-linecap="round"/><path d="M1.6 13.6 L11 4.2" stroke="#f2f2f2" stroke-width="1.5" stroke-linecap="round"/><path d="M5.6 9.6 L9.4 5.8" stroke="#2a2a2a" stroke-width="2.3" stroke-dasharray="0.7 0.6"/><path d="M10 5.2 L11 4.2" stroke="#9ec4ee" stroke-width="1.6" stroke-linecap="round"/></svg>
<svg style="left:1610px;top:53px;" width="16" height="16" viewBox="0 0 16 16"><path d="M1.2 0.8 L10.5 0.8 Q15.6 0.8 15.6 5.8 Q15.6 11.6 10 11.6 L5 11.6 L5 14.6 L0.6 10 L5 5.6 L5 8.4 L10 8.4 Q12.4 8.4 12.4 5.9 Q12.4 3.8 10.2 3.8 L1.2 3.8 Z" fill="#9fd01c" stroke="#4c9610" stroke-width="1.1" stroke-linejoin="round"/><path d="M2 1.9 L10.4 1.9 Q14.4 1.9 14.4 5.6" fill="none" stroke="#c4ea58" stroke-width="0.9"/></svg>
<svg style="left:1637px;top:53px;" width="16" height="16" viewBox="0 0 16 16"><rect x="0.5" y="1.2" width="14" height="14.2" fill="#b8b8b8" opacity="0.6"/><rect x="0.5" y="0.5" width="14" height="14" fill="#fcfcfc" stroke="#8c8c8c" stroke-width="1"/><g stroke="#e6e6ee" stroke-width="0.7"><path d="M4 1 L4 14 M7.5 1 L7.5 14 M11 1 L11 14 M1 4 L14 4 M1 7.5 L14 7.5 M1 11 L14 11"/></g><path d="M2 2 Q3.5 6.5 6.5 8 T13 10.6" fill="none" stroke="#d8302a" stroke-width="1.3"/><path d="M1.8 12.6 Q5 12.2 7.2 9 T13 6.4" fill="none" stroke="#1f82d2" stroke-width="1.4"/><path d="M1.8 7.6 Q4.6 7.6 6.6 5.6 T13 4" fill="none" stroke="#3f9a28" stroke-width="1.4"/></svg>
<div style="left:664px;top:80px;width:188px;height:28px;border:1px solid #000;background:#e1e1e1;border-radius:4px;"></div>
<div style="left:665px;top:100px;width:188px;height:4px;background:#e1e1e1;"></div>
<div style="left:853px;top:103px;width:733px;height:1px;background:#000;"></div>
<div style="left:664px;top:90px;width:1px;height:812px;background:#000;"></div>
<div style="left:1585px;top:103px;width:1px;height:799px;background:#000;"></div>
<svg style="left:668px;top:84px;" width="16" height="16" viewBox="0 0 16 16"><rect x="0" y="0" width="16" height="16" fill="#3cb371"/><circle cx="8" cy="7" r="2.6" fill="none" stroke="#fff" stroke-width="1.4"/><path d="M2.8 11.6 Q8 8.2 13.2 11.6" fill="none" stroke="#fff" stroke-width="1.3"/></svg>
<span style="left:687.5px;top:87px;color:#000;letter-spacing:-0.058px;">Cur Output 0 - Backbuffer Color</span>
<div style="left:665px;top:784px;width:906px;height:117px;background:#e1e1e1;"></div>
<div style="left:729px;top:784px;width:64px;height:62px;background:#969696;"></div>
<div style="left:857px;top:784px;width:64px;height:62px;background:#969696;"></div>
<div style="left:985px;top:784px;width:64px;height:62px;background:#969696;"></div>
<div style="left:1113px;top:784px;width:64px;height:62px;background:#969696;"></div>
<div style="left:1241px;top:784px;width:64px;height:62px;background:#969696;"></div>
<div style="left:1369px;top:784px;width:64px;height:62px;background:#969696;"></div>
<div style="left:1497px;top:784px;width:64px;height:62px;background:#969696;"></div>
<div style="left:665px;top:846px;width:64px;height:55px;background:#969696;"></div>
<div style="left:793px;top:846px;width:64px;height:55px;background:#969696;"></div>
<div style="left:921px;top:846px;width:64px;height:55px;background:#969696;"></div>
<div style="left:1049px;top:846px;width:64px;height:55px;background:#969696;"></div>
<div style="left:1177px;top:846px;width:64px;height:55px;background:#969696;"></div>
<div style="left:1305px;top:846px;width:64px;height:55px;background:#969696;"></div>
<div style="left:1433px;top:846px;width:64px;height:55px;background:#969696;"></div>
<div style="left:1561px;top:846px;width:10px;height:55px;background:#969696;"></div>
<svg style="left:665px;top:104px;" width="906" height="680" viewBox="0 0 906 680"><defs>
<linearGradient id="m1a" x1="0" x2="1" y1="0" y2="0"><stop offset="0" stop-color="#a222a4"/><stop offset="0.16" stop-color="#9f17a1"/><stop offset="0.34" stop-color="#a0009e"/><stop offset="1" stop-color="#a0009e"/></linearGradient>
<linearGradient id="g1a" x1="0" x2="1" y1="0" y2="0"><stop offset="0" stop-color="#12300a"/><stop offset="0.25" stop-color="#132d0c"/><stop offset="1" stop-color="#1e2918"/></linearGradient>
<linearGradient id="m2a" x1="0" x2="1" y1="0" y2="0"><stop offset="0" stop-color="#a43aa5"/><stop offset="0.72" stop-color="#a006a0"/><stop offset="0.75" stop-color="#a0009e"/><stop offset="1" stop-color="#a0009e"/></linearGradient>
<linearGradient id="g2a" x1="0" x2="1" y1="0" y2="0"><stop offset="0" stop-color="#13300a"/><stop offset="1" stop-color="#1e2a16"/></linearGradient>
<linearGradient id="f1a" gradientUnits="userSpaceOnUse" x1="494" y1="376.9" x2="527" y2="706.9"><stop offset="0" stop-color="#6389b5"/><stop offset="0.07" stop-color="#6f80b0"/><stop offset="0.16" stop-color="#7b77ad"/><stop offset="0.3" stop-color="#896ea8"/><stop offset="0.5" stop-color="#9567a2"/><stop offset="1" stop-color="#a0649c"/></linearGradient>
<linearGradient id="f2a" x1="0" x2="1" y1="0" y2="0.25"><stop offset="0" stop-color="#a53cc0" stop-opacity="0"/><stop offset="0.48" stop-color="#a53cc0" stop-opacity="0"/><stop offset="0.8" stop-color="#a53cc0" stop-opacity="0.2"/><stop offset="1" stop-color="#a53cc0" stop-opacity="0.42"/></linearGradient>
</defs>
<rect x="0" y="0" width="906" height="680" fill="#3366cc"/>
<polygon points="0,353.4 906,396.5 906,680 0,680" fill="url(#f1a)"/>
<polygon points="0,353.4 906,396.5 906,680 0,680" fill="url(#f2a)"/>
<polygon points="637.4,253.2 784,248.5 781.3,398 637,390.5" fill="url(#m2a)"/>
<polygon points="784,248.5 807.8,256.3 804.7,385.7 781.3,398" fill="url(#g2a)"/>
<polygon points="0,79.5 158.6,40.7 167.5,680 49,680 0,659" fill="url(#m1a)"/>
<polygon points="158.6,40.7 493.9,151.4 493,553.6 256,680 167.5,680" fill="url(#g1a)"/></svg>
<div style="left:1571px;top:104px;width:14px;height:797px;background:#c8c8c8;"></div>
<svg style="left:1573px;top:108px;" width="11" height="7" viewBox="0 0 11 7"><path d="M0.8 6 L5.5 1.3 L10.2 6" fill="none" stroke="#606060" stroke-width="1.7"/></svg>
<svg style="left:1573px;top:900px;" width="11" height="7" viewBox="0 0 11 7"><path d="M0.8 1 L5.5 5.7 L10.2 1" fill="none" stroke="#606060" stroke-width="1.7"/></svg>
<div style="left:1591px;top:80px;width:82px;height:28px;border:1px solid #000;background:#c8c8c8;border-radius:4px;"></div>
<div style="left:1674px;top:80px;width:81px;height:28px;border:1px solid #000;background:#e1e1e1;border-radius:4px;"></div>
<div style="left:1592px;top:101px;width:303px;height:613px;background:#e1e1e1;"></div>
<div style="left:1591px;top:100px;width:84px;height:1px;background:#555;"></div>
<div style="left:1756px;top:100px;width:140px;height:1px;background:#000;"></div>
<div style="left:1675px;top:100px;width:81px;height:3px;background:#e1e1e1;"></div>
<div style="left:1591px;top:90px;width:1px;height:625px;background:#000;"></div>
<div style="left:1591px;top:714px;width:305px;height:1px;background:#000;"></div>
<span style="left:1594.6px;top:85px;color:#000;letter-spacing:0.155px;">Inputs</span>
<span style="left:1677.3px;top:85px;color:#000;letter-spacing:0.096px;">Outputs</span>
<div style="left:1598px;top:107px;width:294px;height:226px;background:#ff0000;border-radius:2px"></div>
<div style="left:1602px;top:111px;width:286px;height:218px;background:#000;"></div>
<svg style="left:1610px;top:111px;" width="270" height="203" viewBox="0 0 906 680"><defs>
<linearGradient id="m1b" x1="0" x2="1" y1="0" y2="0"><stop offset="0" stop-color="#a222a4"/><stop offset="0.16" stop-color="#9f17a1"/><stop offset="0.34" stop-color="#a0009e"/><stop offset="1" stop-color="#a0009e"/></linearGradient>
<linearGradient id="g1b" x1="0" x2="1" y1="0" y2="0"><stop offset="0" stop-color="#12300a"/><stop offset="0.25" stop-color="#132d0c"/><stop offset="1" stop-color="#1e2918"/></linearGradient>
<linearGradient id="m2b" x1="0" x2="1" y1="0" y2="0"><stop offset="0" stop-color="#a43aa5"/><stop offset="0.72" stop-color="#a006a0"/><stop offset="0.75" stop-color="#a0009e"/><stop offset="1" stop-color="#a0009e"/></linearGradient>
<linearGradient id="g2b" x1="0" x2="1" y1="0" y2="0"><stop offset="0" stop-color="#13300a"/><stop offset="1" stop-color="#1e2a16"/></linearGradient>
<linearGradient id="f1b" gradientUnits="userSpaceOnUse" x1="494" y1="376.9" x2="527" y2="706.9"><stop offset="0" stop-color="#6389b5"/><stop offset="0.07" stop-color="#6f80b0"/><stop offset="0.16" stop-color="#7b77ad"/><stop offset="0.3" stop-color="#896ea8"/><stop offset="0.5" stop-color="#9567a2"/><stop offset="1" stop-color="#a0649c"/></linearGradient>
<linearGradient id="f2b" x1="0" x2="1" y1="0" y2="0.25"><stop offset="0" stop-color="#a53cc0" stop-opacity="0"/><stop offset="0.48" stop-color="#a53cc0" stop-opacity="0"/><stop offset="0.8" stop-color="#a53cc0" stop-opacity="0.2"/><stop offset="1" stop-color="#a53cc0" stop-opacity="0.42"/></linearGradient>
</defs>
<rect x="0" y="0" width="906" height="680" fill="#3366cc"/>
<polygon points="0,353.4 906,396.5 906,680 0,680" fill="url(#f1b)"/>
<polygon points="0,353.4 906,396.5 906,680 0,680" fill="url(#f2b)"/>
<polygon points="637.4,253.2 784,248.5 781.3,398 637,390.5" fill="url(#m2b)"/>
<polygon points="784,248.5 807.8,256.3 804.7,385.7 781.3,398" fill="url(#g2b)"/>
<polygon points="0,79.5 158.6,40.7 167.5,680 49,680 0,659" fill="url(#m1b)"/>
<polygon points="158.6,40.7 493.9,151.4 493,553.6 256,680 167.5,680" fill="url(#g1b)"/></svg>
<div style="left:1602px;top:314px;width:286px;height:15px;background:#666;"></div>
<span style="left:1602.5px;top:316px;color:#000;letter-spacing:-0.300px;transform:scaleX(0.9073);transform-origin:0 0;">FB0</span>
<span style="left:1714.3px;top:316px;color:#000;letter-spacing:-0.146px;">Backbuffer Color</span>
<div style="left:1598px;top:339px;width:294px;height:226px;background:#000;border-radius:2px"></div>
<div style="left:1610px;top:343px;width:270px;height:203px;background:#fff;"></div>
<div style="left:1602px;top:546px;width:286px;height:15px;background:#666;"></div>
<span style="left:1602.7px;top:548px;color:#000;letter-spacing:-0.300px;transform:scaleX(0.9059);transform-origin:0 0;">DS</span>
<span style="left:1692.3px;top:548px;color:#000;letter-spacing:-0.052px;">Backbuffer Depth-stencil</span>
<div style="left:1591px;top:720px;width:305px;height:1px;background:#000;"></div>
<div style="left:1591px;top:720px;width:1px;height:182px;background:#000;"></div>
<div style="left:1592px;top:721px;width:303px;height:14px;background:#bbbbbb;"></div>
<div style="left:1592px;top:735px;width:304px;height:1px;background:#8a8a8a;"></div>
<span style="left:1595.3px;top:722px;color:#000;letter-spacing:-0.009px;">Pixel Context</span>
<div style="left:1592px;top:736px;width:303px;height:165px;background:#e1e1e1;"></div>
<div style="left:1592px;top:736px;width:64px;height:51px;background:#969696;"></div>
<div style="left:1720px;top:736px;width:64px;height:51px;background:#969696;"></div>
<div style="left:1848px;top:736px;width:47px;height:51px;background:#969696;"></div>
<div style="left:1656px;top:787px;width:64px;height:64px;background:#969696;"></div>
<div style="left:1784px;top:787px;width:64px;height:64px;background:#969696;"></div>
<div style="left:1592px;top:851px;width:64px;height:50px;background:#969696;"></div>
<div style="left:1720px;top:851px;width:64px;height:50px;background:#969696;"></div>
<div style="left:1848px;top:851px;width:47px;height:50px;background:#969696;"></div>
</body></html>
